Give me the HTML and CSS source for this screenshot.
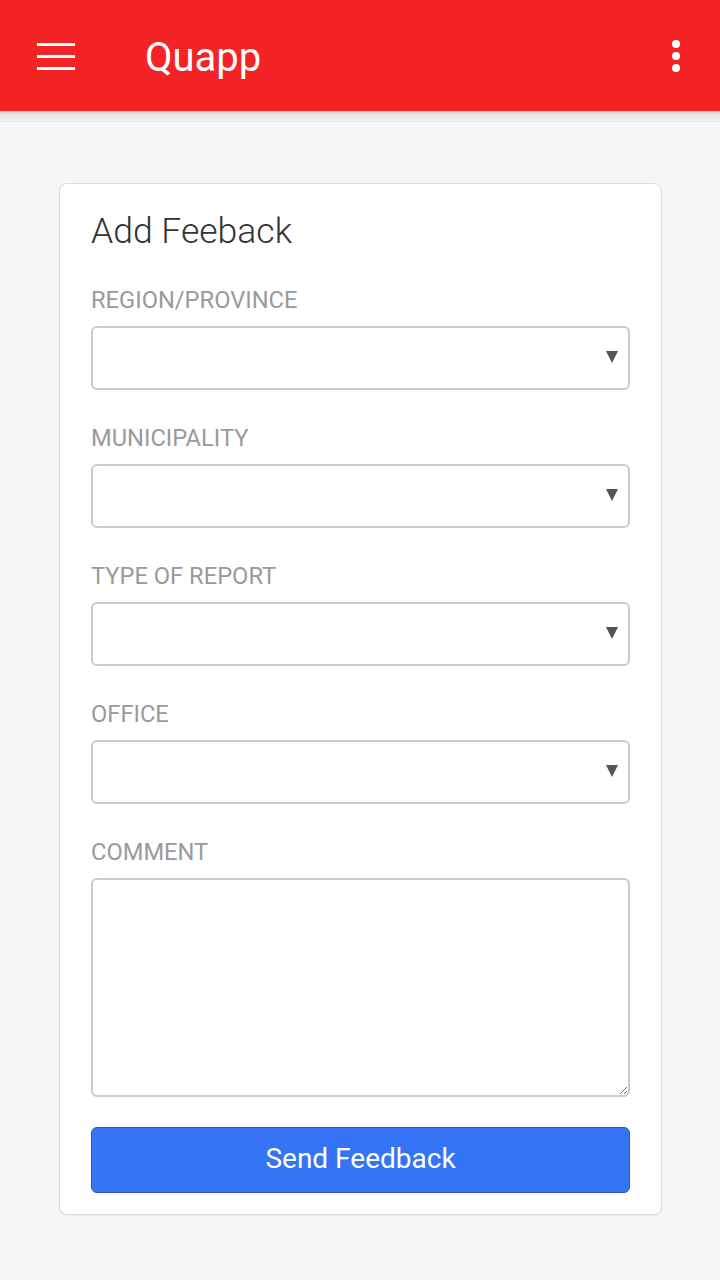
FILE: index.html
```html
<!DOCTYPE html>
<html>
<head>
<meta charset="utf-8">
<link rel="stylesheet" href="styles.css">
</head>
<body>
<header class="appbar">
  <button class="icon-btn menu" aria-label="Menu">
    <svg width="38" height="28" viewBox="0 0 38 28"><rect x="0" y="0" width="38" height="3" fill="#fff"/><rect x="0" y="12" width="38" height="3" fill="#fff"/><rect x="0" y="24" width="38" height="3" fill="#fff"/></svg>
  </button>
  <h1 class="app-title">Quapp</h1>
  <button class="icon-btn more" aria-label="More">
    <svg width="10" height="34" viewBox="0 0 10 34"><circle cx="5" cy="5" r="4" fill="#fff"/><circle cx="5" cy="17" r="4" fill="#fff"/><circle cx="5" cy="29" r="4" fill="#fff"/></svg>
  </button>
</header>
<div class="appbar-shadow"></div>
<main class="content">
  <form class="card">
    <h2 class="card-title">Add Feeback</h2>
    <div class="field">
      <label class="field-label">REGION/PROVINCE</label>
      <div class="select-wrap"><select class="select"><option></option></select></div>
    </div>
    <div class="field">
      <label class="field-label">MUNICIPALITY</label>
      <div class="select-wrap"><select class="select"><option></option></select></div>
    </div>
    <div class="field">
      <label class="field-label">TYPE OF REPORT</label>
      <div class="select-wrap"><select class="select"><option></option></select></div>
    </div>
    <div class="field">
      <label class="field-label">OFFICE</label>
      <div class="select-wrap"><select class="select"><option></option></select></div>
    </div>
    <div class="field last">
      <label class="field-label">COMMENT</label>
      <textarea class="textarea"></textarea>
    </div>
    <button type="button" class="submit">Send Feedback</button>
  </form>
</main>
</body>
</html>
```
FILE: styles.css
```css
* { box-sizing: border-box; }
html, body { margin: 0; padding: 0; }
body {
  background: #f6f6f6;
  font-family: Roboto, "Liberation Sans", sans-serif;
  width: 720px;
  min-height: 1280px;
}
.appbar {
  height: 111px;
  background: #f42426;
  display: flex;
  align-items: center;
  padding: 0 0 0 37px;
}
.icon-btn {
  background: none;
  border: 0;
  padding: 0;
  margin: 0;
  display: flex;
}
.menu { margin-top: 3px; }
.app-title {
  margin: 4px 0 0 70px;
  font-size: 40px;
  font-weight: 400;
  color: #fff;
  flex: 1;
  line-height: 46px;
}
.more { margin-right: 39px; margin-top: 1px; }
.appbar-shadow {
  height: 11px;
  background: linear-gradient(#cfcfcf 0%, #e6e6e6 35%, #efefef 85%, #e4e4e4 100%);
}
.content {
  padding: 61px 58px 0 59px;
}
.card {
  background: #fff;
  border: 1px solid #dcdcdc;
  border-radius: 8px;
  padding: 26px 31px 21px 31px;
  box-shadow: 0 1px 2px rgba(0,0,0,0.05);
}
.card-title {
  margin: 0 0 35px 0;
  font-size: 35.5px;
  line-height: 42px;
  font-weight: 300;
  color: #333;
}
.field { margin-bottom: 35px; }
.field.last { margin-bottom: 30px; }
.field-label {
  display: block;
  font-size: 23.7px;
  line-height: 26px;
  color: #9a9a9a;
  margin-bottom: 13px;
}
.select-wrap { position: relative; }
.select-wrap::after {
  content: "";
  position: absolute;
  right: 12px;
  top: 25px;
  border-left: 6px solid transparent;
  border-right: 6px solid transparent;
  border-top: 12px solid #555;
  pointer-events: none;
}
.select {
  display: block;
  width: 100%;
  height: 64px;
  appearance: none;
  -webkit-appearance: none;
  background: #fff;
  border: 2px solid #cbcbcb;
  border-radius: 6px;
  font: inherit;
  margin: 0;
}
.textarea {
  display: block;
  width: 100%;
  height: 219px;
  border: 2px solid #cbcbcb;
  border-radius: 6px;
  margin: 0;
  font: inherit;
  background: #fff;
}
.submit {
  display: block;
  width: 100%;
  height: 66px;
  background: #3574f5;
  border: 1px solid #2b5f9e;
  border-radius: 6px;
  color: #fff;
  font-family: Roboto, "Liberation Sans", sans-serif;
  font-size: 28px;
  font-weight: 400;
  margin: 0;
  padding: 0 0 4px 0;
}
```
